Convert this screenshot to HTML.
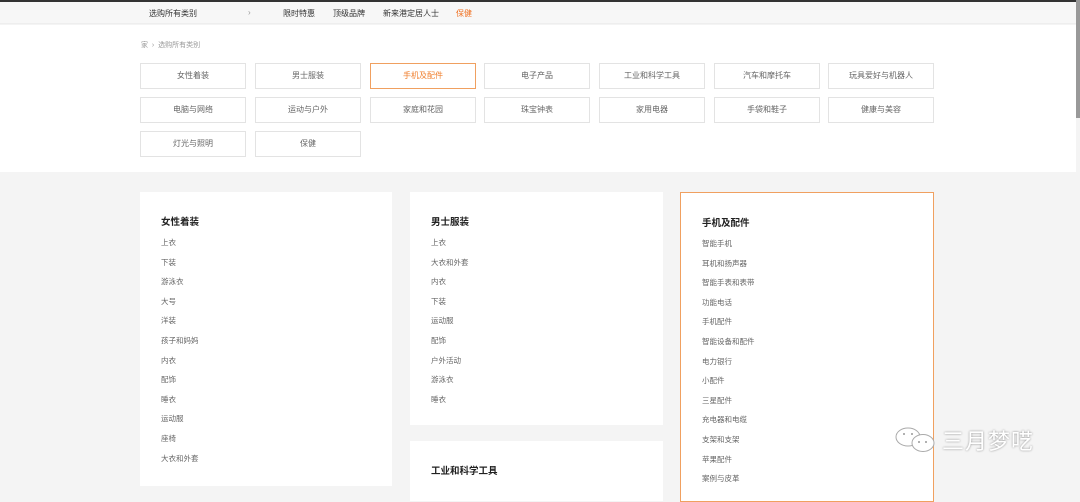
<!DOCTYPE html>
<html><head><meta charset="utf-8"><style>
*{margin:0;padding:0;box-sizing:border-box}
body{width:1080px;height:488px;overflow:hidden;background:#f4f4f4;font-family:"Liberation Sans","Noto Sans CJK SC",sans-serif;position:relative;color:#333}
.top{position:absolute;left:0;top:0;width:1080px;height:2px;background:#333}
.hdr{position:absolute;left:0;top:2px;width:1076px;height:22px;background:#f7f7f7;border-bottom:1px solid #eee;font-size:8px;color:#333}
.hdr span{position:absolute;top:6px}
.white{position:absolute;left:0;top:25px;width:1076px;height:147px;background:#fff}
.bc{position:absolute;left:141px;top:40px;font-size:7px;color:#999}
.btn{position:absolute;width:106px;height:26px;border:1px solid #e3e3e3;background:#fff;font-size:8px;color:#666;text-align:center;line-height:24px}
.btn.on{border-color:#f0a060;color:#f08030}
.card{position:absolute;background:#fff;padding:0 21px}
.card h3{font-size:9.5px;font-weight:bold;color:#222;margin-top:22px;margin-bottom:9px}
.card p{font-size:7.5px;color:#666;height:19.6px}
.sb{position:absolute;left:1076px;top:0;width:4px;height:118px;background:#999}
.wm{position:absolute;left:942px;top:424px;font-size:22px;color:#fff;text-shadow:0 0 2px #888;letter-spacing:1px}
</style></head><body>
<div class="top"></div>
<div class="hdr">
<span style="left:149px">选购所有类别</span><span style="left:248px;color:#999">›</span>
<span style="left:283px">限时特惠</span><span style="left:333px">顶级品牌</span><span style="left:383px">新来港定居人士</span><span style="left:456px;color:#f07020">保健</span></div>
<div class="white"></div>
<div class="bc">家 &nbsp;›&nbsp; 选购所有类别</div>
<div class="btn" style="left:140px;top:63px">女性着装</div>
<div class="btn" style="left:255px;top:63px">男士服装</div>
<div class="btn on" style="left:370px;top:63px">手机及配件</div>
<div class="btn" style="left:484px;top:63px">电子产品</div>
<div class="btn" style="left:599px;top:63px">工业和科学工具</div>
<div class="btn" style="left:714px;top:63px">汽车和摩托车</div>
<div class="btn" style="left:828px;top:63px">玩具爱好与机器人</div>
<div class="btn" style="left:140px;top:97px">电脑与网络</div>
<div class="btn" style="left:255px;top:97px">运动与户外</div>
<div class="btn" style="left:370px;top:97px">家庭和花园</div>
<div class="btn" style="left:484px;top:97px">珠宝钟表</div>
<div class="btn" style="left:599px;top:97px">家用电器</div>
<div class="btn" style="left:714px;top:97px">手袋和鞋子</div>
<div class="btn" style="left:828px;top:97px">健康与美容</div>
<div class="btn" style="left:140px;top:131px">灯光与照明</div>
<div class="btn" style="left:255px;top:131px">保健</div>
<div class="card" style="left:140px;top:192px;width:252px;height:294px"><h3>女性着装</h3>
<p>上衣</p><p>下装</p><p>游泳衣</p><p>大号</p><p>洋装</p><p>孩子和妈妈</p><p>内衣</p><p>配饰</p><p>睡衣</p><p>运动服</p><p>座椅</p><p>大衣和外套</p></div>
<div class="card" style="left:410px;top:192px;width:253px;height:233px"><h3>男士服装</h3>
<p>上衣</p><p>大衣和外套</p><p>内衣</p><p>下装</p><p>运动服</p><p>配饰</p><p>户外活动</p><p>游泳衣</p><p>睡衣</p></div>
<div class="card" style="left:410px;top:441px;width:253px;height:60px"><h3>工业和科学工具</h3></div>
<div class="card" style="left:680px;top:192px;width:254px;height:310px;border:1px solid #f0a060;padding:0 21px"><h3>手机及配件</h3>
<p>智能手机</p><p>耳机和扬声器</p><p>智能手表和表带</p><p>功能电话</p><p>手机配件</p><p>智能设备和配件</p><p>电力银行</p><p>小配件</p><p>三星配件</p><p>充电器和电缆</p><p>支架和支架</p><p>苹果配件</p><p>案例与皮革</p></div>
<div class="sb"></div>
<svg style="position:absolute;left:893px;top:426px" width="48" height="30" viewBox="0 0 48 30"><ellipse cx="15" cy="11" rx="12" ry="9" fill="#fff" stroke="#aaa"/><ellipse cx="30" cy="17" rx="11" ry="8.5" fill="#fff" stroke="#aaa"/><circle cx="26" cy="16" r="1" fill="#999"/><circle cx="33" cy="16" r="1" fill="#999"/><circle cx="11" cy="8" r="1" fill="#999"/><circle cx="19" cy="8" r="1" fill="#999"/></svg>
<div class="wm">三月梦呓</div>
</body></html>
